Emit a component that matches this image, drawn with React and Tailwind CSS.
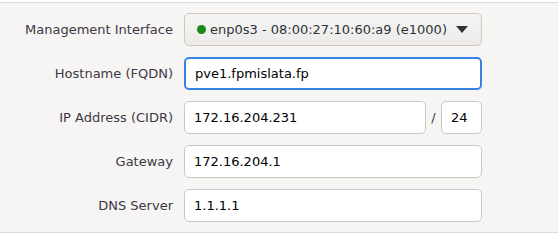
const FIELDS = [
  { label: 'Hostname (FQDN)', value: 'pve1.fpmislata.fp', focused: true },
  { label: 'IP Address (CIDR)', value: '172.16.204.231', prefix: '24' },
  { label: 'Gateway', value: '172.16.204.1' },
  { label: 'DNS Server', value: '1.1.1.1' },
];

function Row({ label, children }) {
  return (
    <div className="flex items-center h-[33px]">
      <div className="w-[184px] pr-[11px] text-right text-[13px] text-[#3d3846]">{label}</div>
      <div className="w-[298px] flex items-center h-full">{children}</div>
    </div>
  );
}

export default function App() {
  return (
    <div className="w-[558px] h-[234px] bg-white pt-[2px]" style={{ fontFamily: '"DejaVu Sans", sans-serif' }}>
      <div className="h-[231px] bg-[#f6f5f4] border-t border-b border-[#dedad6] pt-[10px] flex flex-col gap-[11px]">
        <Row label="Management Interface">
          <div className="flex-1 h-full flex items-center rounded-[5px] border border-[#cdc7c2] bg-gradient-to-b from-[#f6f5f4] to-[#edebe9] pl-[12px] pr-[13px] text-[13px] text-[#2e3436]">
            <span className="w-[9px] h-[9px] rounded-full bg-[#168a16] mr-[4px]" />
            <span className="flex-1">enp0s3 - 08:00:27:10:60:a9 (e1000)</span>
            <svg width="12" height="7" viewBox="0 0 12 7">
              <path d="M0 0 L12 0 L6 7 Z" fill="#2e3436" />
            </svg>
          </div>
        </Row>
        {FIELDS.map((f) => (
          <Row key={f.label} label={f.label}>
            <div
              className={`h-full flex items-center rounded-[5px] bg-white pl-[9px] text-[13px] text-black ${
                f.focused ? 'border-2 border-[#3584e4] pl-[8px]' : 'border border-[#cdc7c2]'
              } ${f.prefix ? 'w-[242px]' : 'flex-1'}`}
            >
              {f.value}
            </div>
            {f.prefix && (
              <>
                <span className="w-[15px] text-center text-[13px] text-[#3d3846]">/</span>
                <div className="flex-1 h-full flex items-center rounded-[5px] bg-white border border-[#cdc7c2] pl-[9px] text-[13px] text-black">
                  {f.prefix}
                </div>
              </>
            )}
          </Row>
        ))}
      </div>
    </div>
  );
}
